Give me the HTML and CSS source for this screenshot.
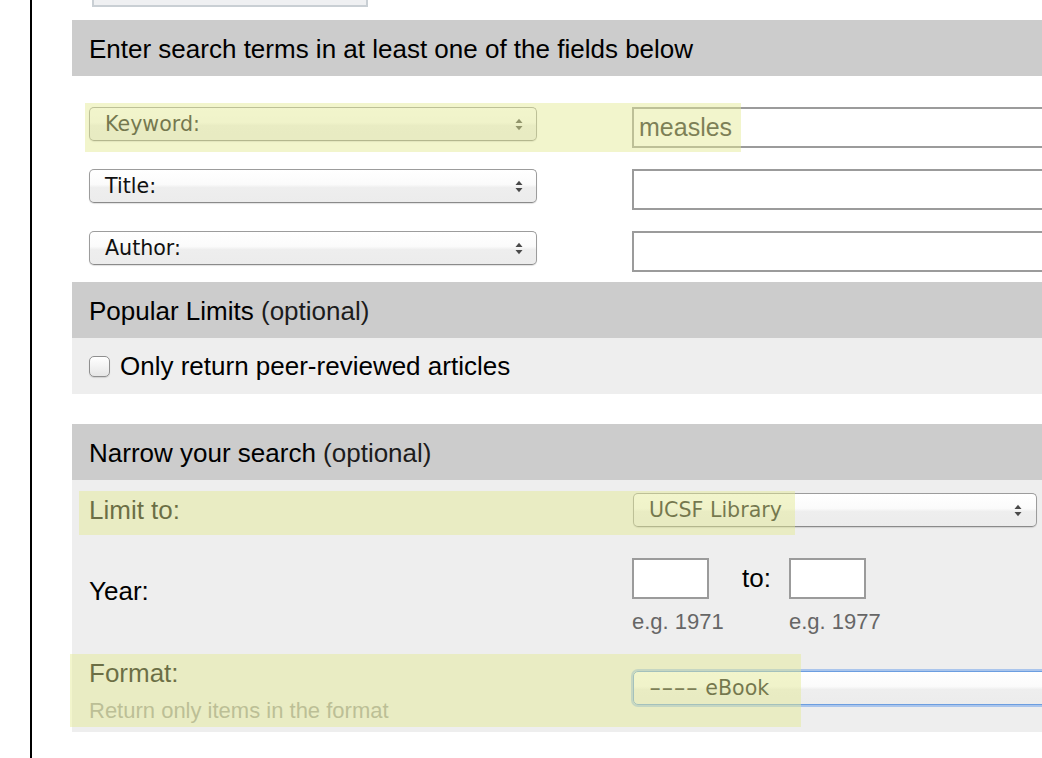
FILE: index.html
```html
<!DOCTYPE html>
<html>
<head>
<meta charset="utf-8">
<title>Search</title>
<link rel="stylesheet" href="styles.css">
</head>
<body>
<div class="page">
  <div class="topbox"></div>

  <div class="hdr hdr-first">Enter search terms in at least one of the fields below</div>
  <div class="terms">
    <div class="term-row">
      <div class="sel sel-term"><span>Keyword:</span><svg class="arrows" width="8" height="13" viewBox="0 0 8 13"><polygon points="0.5,5 4,0.8 7.5,5" /><polygon points="0.5,8 4,12.2 7.5,8" /></svg></div>
      <div class="txt">measles</div>
    </div>
    <div class="term-row">
      <div class="sel sel-term"><span>Title:</span><svg class="arrows" width="8" height="13" viewBox="0 0 8 13"><polygon points="0.5,5 4,0.8 7.5,5" /><polygon points="0.5,8 4,12.2 7.5,8" /></svg></div>
      <div class="txt"></div>
    </div>
    <div class="term-row">
      <div class="sel sel-term"><span>Author:</span><svg class="arrows" width="8" height="13" viewBox="0 0 8 13"><polygon points="0.5,5 4,0.8 7.5,5" /><polygon points="0.5,8 4,12.2 7.5,8" /></svg></div>
      <div class="txt"></div>
    </div>
  </div>

  <div class="hdr">Popular Limits <span class="opt">(optional)</span></div>
  <div class="check-row"><span class="cb"></span><span>Only return peer-reviewed articles</span></div>

  <div class="hdr hdr-gap">Narrow your search <span class="opt">(optional)</span></div>
  <div class="narrow">
    <div class="n-row n-limit">
      <div class="n-label">Limit to:</div>
      <div class="sel sel-wide"><span>UCSF Library</span><svg class="arrows" width="8" height="13" viewBox="0 0 8 13"><polygon points="0.5,5 4,0.8 7.5,5" /><polygon points="0.5,8 4,12.2 7.5,8" /></svg></div>
    </div>
    <div class="n-row n-year">
      <div class="n-label year-label">Year:</div>
      <div class="years">
        <div class="yr">
          <div class="yr-input"></div>
          <div class="hint">e.g. 1971</div>
        </div>
        <div class="to">to:</div>
        <div class="yr">
          <div class="yr-input"></div>
          <div class="hint">e.g. 1977</div>
        </div>
      </div>
    </div>
    <div class="n-row n-format">
      <div class="n-label">
        <div>Format:</div>
        <div class="sub">Return only items in the format</div>
      </div>
      <div class="sel sel-focus"><span><span class="dashes">----</span> eBook</span></div>
    </div>
  </div>

  <div class="hl hl-keyword"></div>
  <div class="hl hl-limit"></div>
  <div class="hl hl-format"></div>
</div>
</body>
</html>
```
FILE: styles.css
```css
html, body {
  margin: 0;
  padding: 0;
  height: 100%;
  overflow: hidden;
  background: #ffffff;
  font-family: "Liberation Sans", Arial, Helvetica, sans-serif;
  color: #000;
}

.page {
  position: relative;
  margin-left: 30px;
  border-left: 2px solid #000;
  height: 758px;
  padding-left: 40px;
  box-sizing: border-box;
}

.topbox {
  margin-left: 20px;
  width: 276px;
  height: 7px;
  box-sizing: border-box;
  border: 2px solid #c9cfd4;
  border-top: none;
  background: #eff0f2;
}

.hdr {
  height: 56px;
  box-sizing: border-box;
  background: #cccccc;
  padding: 14px 0 0 17px;
  font-size: 26px;
  line-height: 30px;
  white-space: nowrap;
}
.hdr-first { margin-top: 13px; }
.hdr-gap { margin-top: 30px; }
.opt { color: #1c1c1c; }

/* search terms */
.terms {
  padding: 31px 0 10px 17px;
  display: flex;
  flex-direction: column;
  gap: 21px;
}
.term-row {
  display: flex;
  align-items: flex-start;
}

.sel {
  box-sizing: border-box;
  height: 34px;
  flex: none;
  border: 1px solid #9c9c9c;
  border-bottom-color: #8a8a8a;
  border-radius: 5px;
  background: linear-gradient(#ffffff 0%, #fbfbfb 45%, #eeeeee 55%, #ececec 100%);
  box-shadow: 0 1px 1px rgba(0, 0, 0, 0.12);
  display: flex;
  align-items: center;
  justify-content: space-between;
  padding: 0 13px 0 15px;
  font-family: "DejaVu Sans", "Liberation Sans", sans-serif;
  font-size: 20.6px;
  color: #111;
  white-space: nowrap;
}
.sel-term { width: 448px; margin-right: 95px; }
.arrows { fill: #4a4a4a; flex: none; }

.txt {
  flex: none;
  width: 520px;
  height: 41px;
  box-sizing: border-box;
  border: 2px solid #9b9b9b;
  background: #fff;
  font-size: 25px;
  line-height: 37px;
  padding-left: 5px;
  color: #222;
}

/* popular limits */
.check-row {
  height: 56px;
  box-sizing: border-box;
  background: #eeeeee;
  display: flex;
  align-items: center;
  padding-left: 17px;
  font-size: 26px;
  white-space: nowrap;
}
.cb {
  width: 21px;
  height: 21px;
  box-sizing: border-box;
  border: 1px solid #8f8f8f;
  border-radius: 5px;
  background: linear-gradient(#ffffff, #e6e6e6);
  box-shadow: 0 1px 1px rgba(0, 0, 0, 0.12);
  margin-right: 10px;
  flex: none;
}

/* narrow search */
.narrow {
  background: #eeeeee;
  padding: 13px 0 8px 17px;
}
.n-row {
  display: flex;
  align-items: flex-start;
}
.n-label {
  width: 543px;
  flex: none;
  font-size: 26px;
  line-height: 30px;
  white-space: nowrap;
}
.n-limit { align-items: center; }
.sel-wide { width: 404px; margin-left: 1px; padding-right: 14px; }

.n-year { margin-top: 31px; }
.year-label { margin-top: 18px; }
.years {
  display: flex;
  align-items: flex-start;
}
.yr { width: 77px; flex: none; }
.yr-input {
  width: 77px;
  height: 41px;
  box-sizing: border-box;
  border: 2px solid #9b9b9b;
  background: #fff;
}
.hint {
  margin-top: 10px;
  font-size: 22px;
  line-height: 26px;
  color: #666;
  white-space: nowrap;
}
.to {
  margin: 0 18px 0 33px;
  font-size: 26px;
  line-height: 41px;
}

.n-format { margin-top: 23px; }
.sub {
  margin-top: 10px;
  font-size: 22px;
  line-height: 26px;
  color: #999;
}
.sel-focus {
  width: 520px;
  margin-left: 1px;
  margin-top: 13px;
  border: 1px solid #6c9ee0;
  box-shadow: 0 0 0 2px rgba(125, 170, 235, 0.6);
  justify-content: flex-start;
}
.dashes {
  display: inline-block;
  transform: scaleX(1.65);
  transform-origin: left center;
  margin-right: 20px;
  color: #222;
}

/* highlight annotations over the form */
.hl {
  position: absolute;
  background: rgba(228, 234, 147, 0.47);
  pointer-events: none;
}
.hl-keyword { left: 53px; top: 103px; width: 656px; height: 49px; }
.hl-limit { left: 47px; top: 491px; width: 716px; height: 44px; }
.hl-format { left: 38px; top: 654px; width: 731px; height: 73px; }
```
